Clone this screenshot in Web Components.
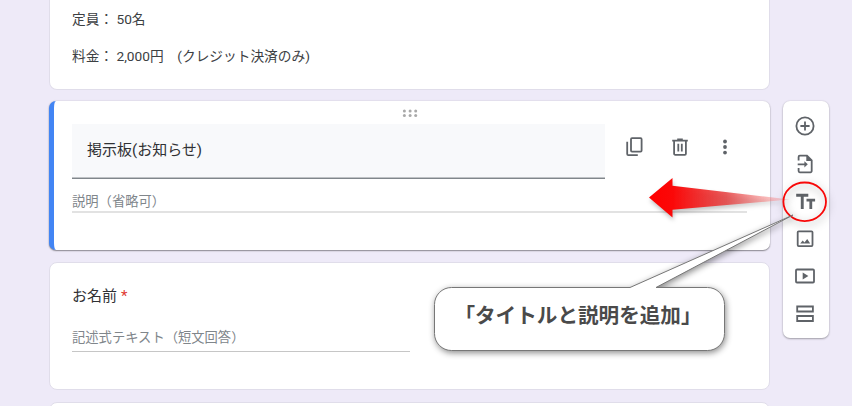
<!DOCTYPE html>
<html lang="ja">
<head>
<meta charset="utf-8">
<title>フォーム</title>
<style>
    body {
        margin: 0;
        width: 852px;
        height: 406px;
        overflow: hidden;
        background: #eeeaf8;
        color: #3c4043;
        font-family: Roboto, "Noto Sans CJK JP", sans-serif;
    }
</style>
</head>
<body>
<form-editor>
    <form-card class="info">
        <info-line>定員： 50名</info-line>
        <info-line>料金： 2,000円　(クレジット決済のみ)</info-line>
    </form-card>
    <form-card class="active" active>
        <title-editor description="説明（省略可）">掲示板(お知らせ)</title-editor>
    </form-card>
    <form-card class="question">
        <short-question answer="記述式テキスト（短文回答）" required>お名前</short-question>
    </form-card>
    <form-card class="next"></form-card>
    <tool-bar slot="tools"></tool-bar>
    <callout-note slot="overlay">「タイトルと説明を追加」</callout-note>
</form-editor>

<script>
const ICONS = {
    add: '<circle cx="12" cy="12" r="8.6"/><path d="M12 7.4v9.2M7.4 12h9.2"/>',
    import: '<path d="M5.6 8.6V4.9a1.2 1.2 0 0 1 1.2-1.2H14l4.7 4.7v10.7a1.2 1.2 0 0 1-1.2 1.2H6.8a1.2 1.2 0 0 1-1.2-1.2v-3.2M4.7 12.3h7.8"/><path class="fill" d="M13.3 3.2v5.7H19zM11.4 9.2l3.4 3.1-3.4 3.1z"/>',
    title: '<path class="fill" d="M3.2 4.8h12.1v2.9h-4.6v12.2H7.8V7.7H3.2zM13.5 9.7h8.6v2.7h-2.9v7.5h-2.8v-7.5h-2.9z"/>',
    image: '<rect x="4.7" y="4.3" width="14.8" height="14.8" rx="1"/><path class="fill" d="M7.2 16.6l2.5-3.2 1.8 2 2.7-3.5 3 4.7z"/>',
    video: '<rect x="3" y="5.5" width="18" height="13" rx="1"/><path class="fill" d="M9.7 8.6v6.8l5.7-3.4z"/>',
    section: '<path d="M4.2 4.5h15.7v5H4.2zM4.2 14h15.7v5H4.2z"/>',
    copy: '<rect x="8" y="3.2" width="10.6" height="13.4" rx="1"/><path d="M4.2 6.7v12.4a1.1 1.1 0 0 0 1.1 1.1h9.5"/>',
    trash: '<path d="M6.1 6.2v12.5a1.1 1.1 0 0 0 1.1 1.1h9.6a1.1 1.1 0 0 0 1.1-1.1V6.2M4.2 5.6h15.6M9.2 4.5h5.6M10.3 8.7v7.9M13.8 8.7v7.9"/>',
    more: '<g class="fill"><circle cx="12" cy="6.5" r="1.9"/><circle cx="12" cy="12" r="1.9"/><circle cx="12" cy="17.6" r="1.9"/></g>'
};

class FormIcon extends HTMLElement {
    constructor() {
        super();
        this.attachShadow({ mode: 'open' });
    }

    connectedCallback() {
        this.shadowRoot.innerHTML = `
            <style>
                :host { display: block; width: 24px; height: 24px; color: #5f6368; }
                svg { display: block; fill: none; stroke: currentColor; stroke-width: 1.8; }
                .fill { fill: currentColor; stroke: none; }
            </style>
            <svg width="24" height="24" viewBox="0 0 24 24">${ICONS[this.getAttribute('name')]}</svg>
        `;
    }
}
customElements.define('form-icon', FormIcon);


class FormEditor extends HTMLElement {
    constructor() {
        super();
        this.attachShadow({ mode: 'open' });
        this.shadowRoot.innerHTML = `
            <style>
                :host {
                    display: flex;
                    align-items: flex-start;
                    gap: 13px;
                    position: relative;
                    height: 406px;
                    padding-left: 49px;
                    overflow: hidden;
                    box-sizing: border-box;
                }
                .cards {
                    display: flex;
                    flex-direction: column;
                    gap: 12px;
                    width: 721px;
                }
                .tools { padding-top: 101px; }
                ::slotted(form-card) { box-sizing: border-box; flex: none; }
                ::slotted(.info) { height: 90px; padding: 9px 22px 0; border-top: 0; border-radius: 0 0 8px 8px; }
                ::slotted(.active) { height: 149px; margin-top: -1px; }
                ::slotted(.question) { height: 128px; padding: 22px 22px 0; }
                ::slotted(.next) { height: 60px; }
            </style>
            <div class="cards"><slot></slot></div>
            <div class="tools"><slot name="tools"></slot></div>
            <slot name="overlay"></slot>
        `;
    }
}
customElements.define('form-editor', FormEditor);


class FormCard extends HTMLElement {
    constructor() {
        super();
        this.attachShadow({ mode: 'open' });
        this.shadowRoot.innerHTML = `
            <style>
                :host {
                    display: block;
                    background: #fff;
                    border: 1px solid #e0ddea;
                    border-radius: 8px;
                }
                :host([active]) {
                    border: 0;
                    border-left: 5px solid #4285f4;
                    padding: 8px 23px 0 18px;
                    border-radius: 7px;
                    box-shadow: 0 1px 1.5px rgba(0, 0, 0, .4), 0 0 2px rgba(0, 0, 0, .14);
                }
            </style>
            <slot></slot>
        `;
    }
}
customElements.define('form-card', FormCard);


class InfoLine extends HTMLElement {
    constructor() {
        super();
        this.attachShadow({ mode: 'open' });
        this.shadowRoot.innerHTML = `
            <style>
                :host {
                    display: block;
                    height: 20px;
                    margin-bottom: 17px;
                    font-size: 13.7px;
                    line-height: 20px;
                    white-space: nowrap;
                }
            </style>
            <slot></slot>
        `;
    }
}
customElements.define('info-line', InfoLine);


class TitleEditor extends HTMLElement {
    constructor() {
        super();
        this.attachShadow({ mode: 'open' });
        this.shadowRoot.innerHTML = `
            <style>
                :host { display: block; }
                .grip { display: block; margin: 0 auto; fill: #a9a9a9; }
                .row { display: flex; margin-top: 6px; }
                .field {
                    box-sizing: border-box;
                    width: 533px;
                    height: 55px;
                    padding-left: 15px;
                    background: #f8f9fb;
                    border-bottom: 1px solid #80868b;
                    box-shadow: inset 0 -1px #bfc2c5;
                    color: #303134;
                    font-size: 15px;
                    line-height: 53px;
                }
                .actions { display: flex; gap: 21px; padding: 11px 0 0 17.5px; }
                .description {
                    height: 32px;
                    border-bottom: 2px solid #e2e2e2;
                    color: #80868b;
                    font-size: 13.3px;
                    line-height: 45px;
                }
            </style>
            <svg class="grip" width="16" height="9" viewBox="0 0 16 9">
                <circle cx="2.4" cy="2" r="1.5"/><circle cx="8.1" cy="2" r="1.5"/><circle cx="13.7" cy="2" r="1.5"/>
                <circle cx="2.4" cy="6.5" r="1.5"/><circle cx="8.1" cy="6.5" r="1.5"/><circle cx="13.7" cy="6.5" r="1.5"/>
            </svg>
            <div class="row">
                <div class="field"><slot></slot></div>
                <div class="actions">
                    <form-icon name="copy"></form-icon>
                    <form-icon name="trash"></form-icon>
                    <form-icon name="more"></form-icon>
                </div>
            </div>
            <div class="description"></div>
        `;
    }

    connectedCallback() {
        this.shadowRoot.querySelector('.description').textContent = this.getAttribute('description') || '';
    }
}
customElements.define('title-editor', TitleEditor);


class ShortQuestion extends HTMLElement {
    constructor() {
        super();
        this.attachShadow({ mode: 'open' });
        this.shadowRoot.innerHTML = `
            <style>
                :host { display: block; }
                .label { color: #303134; font-size: 15px; line-height: 22px; }
                .star { display: none; color: #e03a32; margin-left: 4px; }
                :host([required]) .star { display: inline; }
                .answer {
                    width: 338px;
                    height: 44px;
                    border-bottom: 1px solid #c6c6c6;
                    color: #80868b;
                    font-size: 13.3px;
                    line-height: 61px;
                }
            </style>
            <div class="label"><slot></slot><span class="star">*</span></div>
            <div class="answer"></div>
        `;
    }

    connectedCallback() {
        this.shadowRoot.querySelector('.answer').textContent = this.getAttribute('answer') || '';
    }
}
customElements.define('short-question', ShortQuestion);


class ToolBar extends HTMLElement {
    constructor() {
        super();
        this.attachShadow({ mode: 'open' });
        this.shadowRoot.innerHTML = `
            <style>
                :host {
                    display: flex;
                    flex-direction: column;
                    align-items: center;
                    gap: 13.5px;
                    box-sizing: border-box;
                    width: 46px;
                    height: 237px;
                    padding: 13px 1.6px 0 0;
                    background: #fff;
                    border-radius: 7px;
                    box-shadow: 0 1px 2px rgba(0, 0, 0, .3), 0 0 2px rgba(0, 0, 0, .12);
                }
            </style>
            ${['add', 'import', 'title', 'image', 'video', 'section'].map(name => `<form-icon name="${name}"></form-icon>`).join('')}
        `;
    }
}
customElements.define('tool-bar', ToolBar);


// Arrow, ring and speech bubble drawn over the form
class CalloutNote extends HTMLElement {
    constructor() {
        super();
        this.attachShadow({ mode: 'open' });
        this.shadowRoot.innerHTML = `
            <style>
                :host { position: absolute; inset: 0; }
                svg { position: absolute; inset: 0; }
                .arrow { filter: drop-shadow(1px 3px 2px rgba(0, 0, 0, .25)); }
                .ring { filter: drop-shadow(1px 3px 4px rgba(0, 0, 0, .35)); }
                .bubble { filter: drop-shadow(1px 2px 3px rgba(0, 0, 0, .45)); }
                .text {
                    position: absolute;
                    left: 433px;
                    top: 288px;
                    width: 290px;
                    height: 55px;
                    color: #4a4a4a;
                    font-size: 20.6px;
                    font-weight: 700;
                    line-height: 57px;
                    text-align: center;
                    white-space: nowrap;
                }
            </style>
            <svg width="852" height="406" viewBox="0 0 852 406">
                <defs>
                    <linearGradient id="fade" x1="649" x2="790" y1="0" y2="0" gradientUnits="userSpaceOnUse">
                        <stop offset="0" stop-color="#f00"/>
                        <stop offset=".17" stop-color="#fb0808"/>
                        <stop offset=".55" stop-color="#e64040" stop-opacity=".85"/>
                        <stop offset="1" stop-color="#ff8a8a" stop-opacity=".25"/>
                    </linearGradient>
                </defs>
                <path class="arrow" fill="url(#fade)" d="M649 197.5L672.5 178v7.7L790 199.6 672.5 209.8v7.7z"/>
                <ellipse class="ring" cx="804.7" cy="201.8" rx="21.3" ry="19.3" fill="none" stroke="#f80808" stroke-width="1.8"/>
                <path class="bubble" fill="#fff" stroke="#777" d="M451.5 287.5H630L793 215 656 287.5H707.5a17 17 0 0 1 17 17v29a17 17 0 0 1-17 17h-256a17 17 0 0 1-17-17v-29a17 17 0 0 1 17-17z"/>
            </svg>
            <div class="text"><slot></slot></div>
        `;
    }
}
customElements.define('callout-note', CalloutNote);
</script>
</body>
</html>
